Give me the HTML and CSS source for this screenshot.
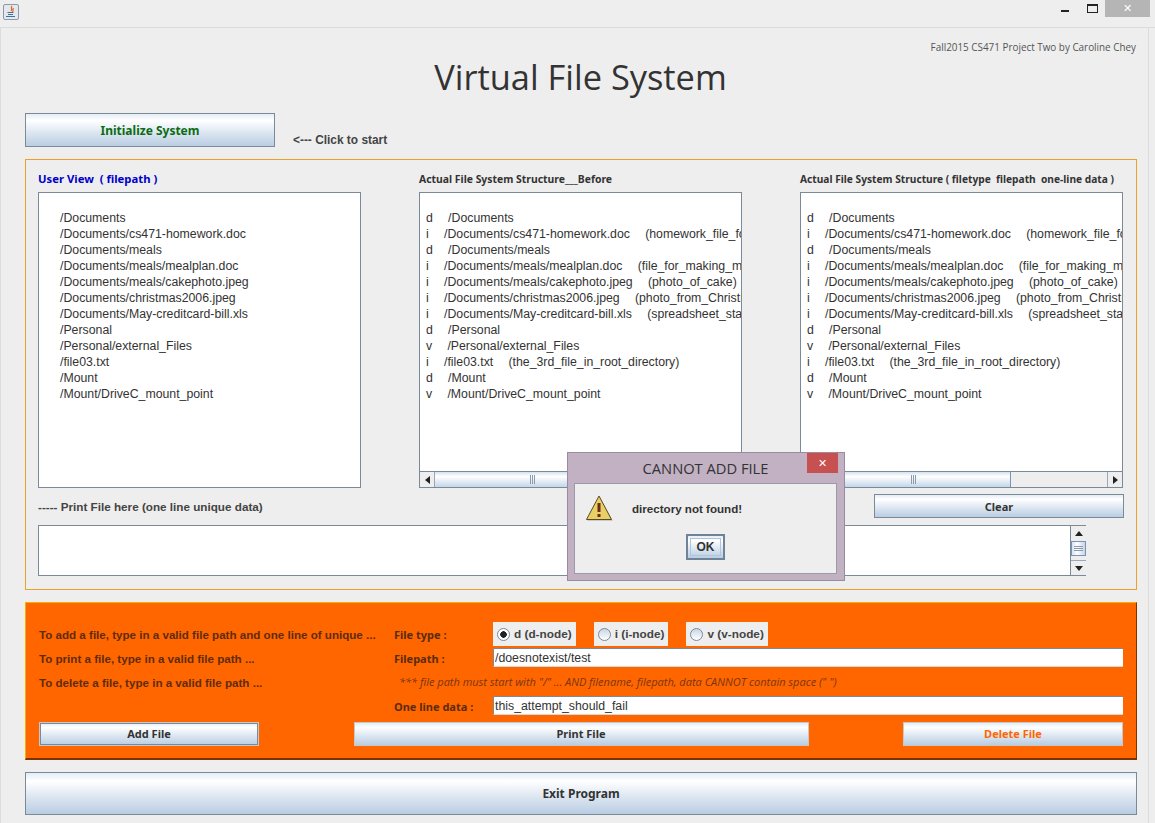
FILE: index.html
```html
<!DOCTYPE html>
<html lang="en">
<head>
    <meta charset="UTF-8">
    <title>Virtual File System</title>
    <link rel="stylesheet" href="styles.css">
</head>
<body>
    <div class="titlebar">
        <div class="java-icon">
            <svg width="14" height="14" viewBox="0 0 14 14">
                <path d="M8 1C6 3 9 4 7 6M9.500 3C8 5 10 5 8.500 7" fill="none" stroke="#d9662a" stroke-width="1.200"/>
                <path d="M3.500 7.500h6M4 9.500h5M2 11.500h9" fill="none" stroke="#46708f" stroke-width="1.100"/>
            </svg>
        </div>
        <div class="win-controls">
            <span class="win-min"></span>
            <span class="win-max"></span>
            <span class="win-close">&#10005;</span>
        </div>
    </div>

    <div class="window">
        <div class="byline">Fall2015 CS471 Project Two by Caroline Chey</div>
        <h1>Virtual File System</h1>

        <div class="start-row">
            <button class="java-btn init-btn" type="button">Initialize System</button>
            <span class="start-hint">&lt;--- Click to start</span>
        </div>

        <section class="view-panel">
            <div class="columns">
                <div class="col">
                    <div class="col-title user-title">User View &nbsp;( filepath )</div>
                    <div class="listbox">
<pre class="list-text user-list">/Documents
/Documents/cs471-homework.doc
/Documents/meals
/Documents/meals/mealplan.doc
/Documents/meals/cakephoto.jpeg
/Documents/christmas2006.jpeg
/Documents/May-creditcard-bill.xls
/Personal
/Personal/external_Files
/file03.txt
/Mount
/Mount/DriveC_mount_point</pre>
                    </div>
                </div>
                <div class="col">
                    <div class="col-title">Actual File System Structure___Before</div>
                    <div class="listbox">
<pre class="list-text">d    /Documents
i    /Documents/cs471-homework.doc    (homework_file_for_cs471)
d    /Documents/meals
i    /Documents/meals/mealplan.doc    (file_for_making_meal_plans)
i    /Documents/meals/cakephoto.jpeg    (photo_of_cake)
i    /Documents/christmas2006.jpeg    (photo_from_Christmas_2006)
i    /Documents/May-creditcard-bill.xls    (spreadsheet_statement)
d    /Personal
v    /Personal/external_Files
i    /file03.txt    (the_3rd_file_in_root_directory)
d    /Mount
v    /Mount/DriveC_mount_point</pre>
                        <div class="hscroll">
                            <span class="arrow-btn"><i class="tri-left"></i></span>
                            <span class="hthumb"><i class="grip"></i></span>
                            <span class="arrow-btn"><i class="tri-right"></i></span>
                        </div>
                    </div>
                </div>
                <div class="col">
                    <div class="col-title wide-title">Actual File System Structure ( filetype &nbsp;filepath &nbsp;one-line data )</div>
                    <div class="listbox">
<pre class="list-text">d    /Documents
i    /Documents/cs471-homework.doc    (homework_file_for_cs471)
d    /Documents/meals
i    /Documents/meals/mealplan.doc    (file_for_making_meal_plans)
i    /Documents/meals/cakephoto.jpeg    (photo_of_cake)
i    /Documents/christmas2006.jpeg    (photo_from_Christmas_2006)
i    /Documents/May-creditcard-bill.xls    (spreadsheet_statement)
d    /Personal
v    /Personal/external_Files
i    /file03.txt    (the_3rd_file_in_root_directory)
d    /Mount
v    /Mount/DriveC_mount_point</pre>
                        <div class="hscroll">
                            <span class="arrow-btn"><i class="tri-left"></i></span>
                            <span class="hthumb"><i class="grip"></i></span>
                            <span class="arrow-btn"><i class="tri-right"></i></span>
                        </div>
                    </div>
                </div>
            </div>

            <div class="print-row">
                <span class="print-label">----- Print File here (one line unique data)</span>
                <button class="java-btn clear-btn" type="button">Clear</button>
            </div>

            <div class="print-output">
                <div class="print-area"></div>
                <div class="vscroll">
                    <span class="arrow-btn"><i class="tri-up"></i></span>
                    <span class="vthumb"><i class="grip-h"></i></span>
                    <span class="arrow-btn"><i class="tri-down"></i></span>
                </div>
            </div>
        </section>

        <section class="action-panel">
            <div class="action-grid">
                <div class="help-text">To add a file, type in a valid file path and one line of unique ...</div>
                <div class="field-label">File type :</div>
                <div class="radio-group">
                    <label class="radio-box"><i class="radio checked"></i>d (d-node)</label>
                    <label class="radio-box"><i class="radio"></i>i (i-node)</label>
                    <label class="radio-box"><i class="radio"></i>v (v-node)</label>
                </div>

                <div class="help-text">To print a file, type in a valid file path ...</div>
                <div class="field-label">Filepath :</div>
                <input class="text-field" type="text" value="/doesnotexist/test">

                <div class="help-text">To delete a file, type in a valid file path ...</div>
                <div class="path-note">*** file path must start with "/" ... AND filename, filepath, data CANNOT contain space (" ")</div>

                <div></div>
                <div class="field-label">One line data :</div>
                <input class="text-field" type="text" value="this_attempt_should_fail">
            </div>

            <div class="action-buttons">
                <button class="java-btn add-btn" type="button">Add File</button>
                <button class="java-btn print-btn" type="button">Print File</button>
                <button class="java-btn delete-btn" type="button">Delete File</button>
            </div>
        </section>

        <button class="java-btn exit-btn" type="button">Exit Program</button>
    </div>

    <div class="dialog">
        <div class="dialog-title">
            <span>CANNOT ADD FILE</span>
            <span class="dialog-close">&#10005;</span>
        </div>
        <div class="dialog-body">
            <div class="dialog-message">
                <svg width="28" height="28" viewBox="0 0 28 28">
                    <path d="M14 2L27 26H1Z" fill="#000" opacity="0.15" transform="translate(1 1)"/>
                    <path d="M14 2L26.500 25.500H1.500Z" fill="#e8cf66" stroke="#5a4a20" stroke-width="1"/>
                    <rect x="12.500" y="9" width="3" height="9" fill="#6b2c1a"/>
                    <rect x="12.500" y="20" width="3" height="3" fill="#6b2c1a"/>
                </svg>
                <span>directory not found!</span>
            </div>
            <button class="java-btn ok-btn" type="button"><span>OK</span></button>
        </div>
    </div>
</body>
</html>
```

FILE: styles.css
```css
html, body {
    margin: 0;
    padding: 0;
    height: 823px;
    overflow: hidden;
}

body {
    position: relative;
    background-color: #eeeeee;
    font-family: "Liberation Sans", Arial, sans-serif;
    color: #333333;
}

.titlebar {
    height: 27px;
    display: flex;
    justify-content: space-between;
    background-color: #eeeeee;
    border-bottom: 1px solid #dcdcdc;
}

.java-icon {
    width: 14px;
    height: 14px;
    margin: 4px 0 0 3px;
    border: 1px solid #8a9aa8;
    border-radius: 2px;
    background-color: #e4e8ec;
}

.win-controls {
    display: flex;
    align-items: flex-start;
    margin-right: 5px;
}

.win-min {
    width: 8px;
    height: 2px;
    margin: 10px 18px 0 0;
    background-color: #222222;
}

.win-max {
    width: 9px;
    height: 6px;
    margin: 4px 7px 0 0;
    border: 1px solid #222222;
    border-top-width: 2px;
}

.win-close {
    width: 45px;
    height: 17px;
    background-color: #b5b5b5;
    color: white;
    font-size: 11px;
    line-height: 17px;
    text-align: center;
}

.window {
    width: 1149px;
    height: 795px;
    box-sizing: border-box;
    padding: 0 12px 0 24px;
    border-left: 1px solid #dcdcdc;
    border-right: 1px solid #dcdcdc;
}

.byline {
    padding-top: 13px;
    height: 12px;
    font-family: "Open Sans", sans-serif;
    font-size: 9.900px;
    line-height: 12px;
    text-align: right;
    color: #555555;
}

h1 {
    margin: 0;
    height: 48px;
    font-family: "Open Sans", sans-serif;
    font-size: 34.400px;
    font-weight: 400;
    line-height: 48px;
    text-align: center;
    color: #333333;
}

.java-btn {
    display: block;
    padding: 0;
    box-sizing: border-box;
    border: 1px solid #7a8a99;
    background: linear-gradient(to bottom, #e3ecf5 0%, #ffffff 20%, #dfe8f2 55%, #b9cde3 100%);
    font-family: "Noto Sans", sans-serif;
    font-size: 11px;
    font-weight: 700;
    color: #333333;
}

.start-row {
    display: flex;
    margin-top: 12px;
    height: 46px;
}

.init-btn {
    width: 250px;
    height: 34px;
    font-size: 12px;
    color: #0b6b12;
}

.start-hint {
    margin: 20px 0 0 18px;
    font-size: 11.900px;
    font-weight: 700;
    line-height: 14px;
    color: #444444;
}

.view-panel {
    width: 1112px;
    height: 431px;
    box-sizing: border-box;
    padding: 12px 13px 0 12px;
    border: 1px solid #eda02a;
}

.columns {
    display: grid;
    grid-template-columns: 323px 323px 323px;
    column-gap: 58px;
}

.col-title {
    height: 20px;
    font-family: "Noto Sans", sans-serif;
    font-size: 10.400px;
    font-weight: 700;
    line-height: 14px;
    color: #333333;
    white-space: nowrap;
}

.wide-title {
    font-size: 10.200px;
}

.user-title {
    font-size: 11.300px;
    color: #0000c8;
}

.listbox {
    position: relative;
    height: 296px;
    box-sizing: border-box;
    border: 1px solid #7a8a99;
    background-color: white;
    overflow: hidden;
}

.list-text {
    margin: 0;
    padding: 17px 0 0 6px;
    font-family: "Liberation Sans", Arial, sans-serif;
    font-size: 12.300px;
    word-spacing: 0.400px;
    line-height: 16px;
    color: #333333;
}

.user-list {
    padding-left: 21px;
}

.hscroll {
    position: absolute;
    left: 0;
    right: 0;
    bottom: 0;
    height: 15px;
    display: flex;
    border-top: 1px solid #7a8a99;
    background-color: #eeeeee;
}

.arrow-btn {
    display: flex;
    flex: none;
    align-items: center;
    justify-content: center;
    width: 15px;
    height: 15px;
    box-sizing: border-box;
    background-color: #eeeeee;
    border-right: 1px solid #9aa7b5;
}

.hscroll .arrow-btn:last-child {
    margin-left: auto;
    border-right: none;
    border-left: 1px solid #9aa7b5;
}

.hthumb {
    display: flex;
    align-items: center;
    justify-content: center;
    width: 194px;
    background: linear-gradient(to bottom, #d5e2f0 0%, #ffffff 30%, #c5d6e9 100%);
    border-right: 1px solid #7a93b5;
}

.grip {
    width: 5px;
    height: 9px;
    background: repeating-linear-gradient(to right, #8a9bb0 0, #8a9bb0 1px, transparent 1px, transparent 2px);
}

.grip-h {
    width: 9px;
    height: 5px;
    background: repeating-linear-gradient(to bottom, #8a9bb0 0, #8a9bb0 1px, transparent 1px, transparent 2px);
}

.tri-left {
    border-top: 4px solid transparent;
    border-bottom: 4px solid transparent;
    border-right: 5px solid #222222;
}

.tri-right {
    border-top: 4px solid transparent;
    border-bottom: 4px solid transparent;
    border-left: 5px solid #222222;
}

.tri-up {
    border-left: 4px solid transparent;
    border-right: 4px solid transparent;
    border-bottom: 5px solid #222222;
}

.tri-down {
    border-left: 4px solid transparent;
    border-right: 4px solid transparent;
    border-top: 5px solid #222222;
}

.print-row {
    display: flex;
    justify-content: space-between;
    margin-top: 6px;
    height: 31px;
}

.print-label {
    margin-top: 6px;
    font-size: 11.700px;
    font-weight: 700;
    line-height: 14px;
    color: #444444;
}

.clear-btn {
    width: 250px;
    height: 24px;
    margin-right: -1px;
}

.print-output {
    display: flex;
    width: 1048px;
    height: 51px;
}

.print-area {
    flex: 1;
    box-sizing: border-box;
    border: 1px solid #7a8a99;
    background-color: white;
}

.vscroll {
    display: flex;
    flex-direction: column;
    width: 15px;
    box-sizing: border-box;
    border-top: 1px solid #7a8a99;
    border-bottom: 1px solid #7a8a99;
    background-color: #eeeeee;
}

.vscroll .arrow-btn {
    height: 15px;
    border-right: none;
}

.vscroll .arrow-btn:last-child {
    margin-top: auto;
    border-top: 1px solid #9aa7b5;
}

.vthumb {
    display: flex;
    align-items: center;
    justify-content: center;
    height: 15px;
    box-sizing: border-box;
    border: 1px solid #7a93b5;
    background: linear-gradient(to right, #d5e2f0 0%, #ffffff 40%, #c5d6e9 100%);
}

.action-panel {
    width: 1112px;
    height: 158px;
    margin-top: 12px;
    box-sizing: border-box;
    padding: 19px 13px 0 13px;
    background-color: #ff6600;
    border-top: 1px solid #f5b000;
    border-left: 1px solid #f5b000;
    border-bottom: 2px solid #7a3300;
    border-right: 1px solid #7a3300;
}

.action-grid {
    display: grid;
    grid-template-columns: 355px 99px 630px;
    grid-auto-rows: 24px;
}

.help-text {
    font-size: 11.600px;
    font-weight: 700;
    line-height: 25px;
    color: #5e2c0c;
    white-space: nowrap;
}

.field-label {
    font-family: "Noto Sans", sans-serif;
    font-size: 11px;
    font-weight: 700;
    line-height: 25px;
    color: #5a2c0c;
}

.path-note {
    grid-column: 2 / 4;
    padding-left: 5px;
    font-family: "Open Sans", sans-serif;
    font-size: 11px;
    font-style: italic;
    line-height: 24px;
    color: #7a3510;
    white-space: nowrap;
}

.radio-group {
    display: flex;
    gap: 18px;
    height: 24px;
}

.radio-box {
    display: flex;
    align-items: center;
    gap: 4px;
    height: 24px;
    padding: 0 4px;
    background-color: #eeeeee;
    font-size: 11.800px;
    font-weight: 700;
    color: #444444;
}

.radio {
    width: 11px;
    height: 11px;
    border: 1px solid #7a8a99;
    border-radius: 50%;
    background: linear-gradient(to bottom, #c9d6e6, #ffffff);
}

.radio.checked {
    background: radial-gradient(circle, #222222 0, #222222 3px, #ffffff 3.500px);
}

.text-field {
    width: 630px;
    height: 19px;
    margin: 2px 0 0 0;
    padding: 0 1px;
    box-sizing: border-box;
    border: none;
    border-top: 1px solid #7a8a99;
    border-left: 1px solid #7a8a99;
    border-bottom: 1px solid #d8d8d8;
    background-color: white;
    font-family: "Liberation Sans", Arial, sans-serif;
    font-size: 12.300px;
    color: #333333;
}

.action-buttons {
    display: flex;
    justify-content: space-between;
    width: 1084px;
    margin-top: 4px;
}

.action-buttons .java-btn {
    height: 24px;
    border-color: #c8c8c8;
    padding-bottom: 2px;
}

.action-buttons .add-btn {
    width: 220px;
    box-shadow: inset 0 0 0 1px #7a8a99;
}

.print-btn {
    width: 455px;
}

.delete-btn {
    width: 220px;
    color: #ff6600;
}

.exit-btn {
    width: 1112px;
    height: 43px;
    margin-top: 12px;
    font-size: 12px;
}

.dialog {
    position: absolute;
    left: 567px;
    top: 452px;
    width: 278px;
    height: 129px;
    box-sizing: border-box;
    padding: 0 7px 7px 6px;
    border: 1px solid #9a8ca0;
    background-color: #c1b1c3;
}

.dialog-title {
    position: relative;
    height: 30px;
    font-family: "Open Sans", sans-serif;
    font-size: 14.700px;
    line-height: 30px;
    text-align: center;
    color: #333333;
}

.dialog-close {
    position: absolute;
    top: 0;
    right: -1px;
    width: 31px;
    height: 20px;
    background-color: #c75050;
    color: white;
    font-size: 11px;
    line-height: 20px;
}

.dialog-body {
    height: 91px;
    box-sizing: border-box;
    padding: 10px 0 0 0;
    border: 1px solid #9a9aa8;
    background-color: #eeeeee;
}

.dialog-message {
    display: flex;
    align-items: center;
    gap: 19px;
    padding-left: 10px;
    font-size: 11.600px;
    font-weight: 700;
    color: #333333;
}

.ok-btn {
    width: 39px;
    height: 26px;
    margin: 12px auto 0 auto;
    border: 2px solid #6f8296;
    font-family: "Liberation Sans", Arial, sans-serif;
    font-size: 12px;
}

.ok-btn span {
    display: block;
    margin: 2px;
    line-height: 16px;
    border: 1px solid #b0c4dc;
}
```
